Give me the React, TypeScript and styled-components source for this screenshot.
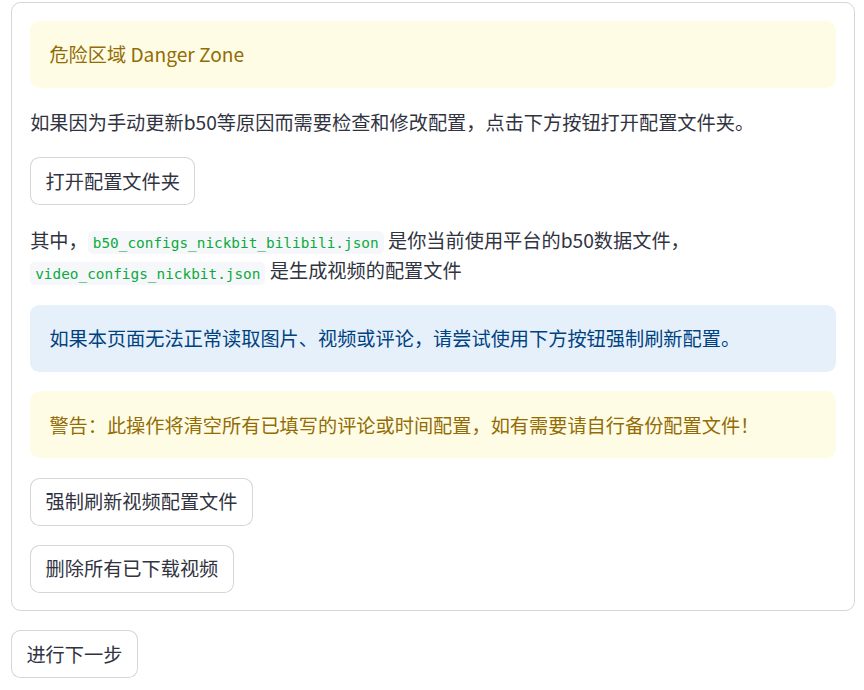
import React from "react";
import styled, { createGlobalStyle } from "styled-components";

const Global = createGlobalStyle`
  html, body { margin: 0; padding: 0; background: #ffffff; }
  body {
    font-family: "Noto Sans CJK SC", "Noto Sans", sans-serif;
    color: #31333f;
    font-size: 19.2px;
  }
`;

const Page = styled.div`
  display: flex;
  flex-direction: column;
  gap: 19.2px;
  padding: 2px 9px 0 11px;
  align-items: flex-start;
`;

const Card = styled.div`
  align-self: stretch;
  border: 1px solid rgba(49, 51, 63, 0.2);
  border-radius: 9.6px;
  padding: 18.2px 18.2px 17.2px;
  display: flex;
  flex-direction: column;
  gap: 19.2px;
  align-items: flex-start;
`;

const Alert = styled.div<{ $tone: "warning" | "info" }>`
  align-self: stretch;
  border-radius: 9.6px;
  padding: 18.2px 19.2px;
  line-height: 30.7px;
  font-size: 19.2px;
  background: ${(p) => (p.$tone === "warning" ? "#fffce6" : "#e6f0fb")};
  color: ${(p) => (p.$tone === "warning" ? "#926c05" : "#004280")};
`;

const Para = styled.p`
  margin: 0;
  line-height: 30.7px;
  font-size: 19.2px;
  color: #31333f;
`;

const Code = styled.code`
  font-family: "DejaVu Sans Mono", "Liberation Mono", monospace;
  font-size: 14.4px;
  line-height: 1;
  color: #09ab3b;
  background: rgba(240, 242, 246, 0.6);
  border-radius: 4.8px;
  padding: 3.6px 5px;
`;

const Button = styled.button`
  font-family: "Noto Sans CJK SC", "Noto Sans", sans-serif;
  font-size: 19.2px;
  color: #31333f;
  background: #ffffff;
  border: 1px solid rgba(49, 51, 63, 0.2);
  border-radius: 9.6px;
  height: 48px;
  padding: 0 14.4px;
  display: inline-flex;
  align-items: center;
  justify-content: center;
  line-height: 1.6;
  cursor: pointer;
`;

export default function App() {
  return (
    <>
      <Global />
      <Page>
        <Card>
          <Alert $tone="warning">危险区域 Danger Zone</Alert>
          <Para>如果因为手动更新b50等原因而需要检查和修改配置，点击下方按钮打开配置文件夹。</Para>
          <Button>打开配置文件夹</Button>
          <Para>
            其中，<Code>b50_configs_nickbit_bilibili.json</Code> 是你当前使用平台的b50数据文件，
            <br />
            <Code>video_configs_nickbit.json</Code> 是生成视频的配置文件
          </Para>
          <Alert $tone="info">如果本页面无法正常读取图片、视频或评论，请尝试使用下方按钮强制刷新配置。</Alert>
          <Alert $tone="warning">警告：此操作将清空所有已填写的评论或时间配置，如有需要请自行备份配置文件！</Alert>
          <Button>强制刷新视频配置文件</Button>
          <Button>删除所有已下载视频</Button>
        </Card>
        <Button>进行下一步</Button>
      </Page>
    </>
  );
}
